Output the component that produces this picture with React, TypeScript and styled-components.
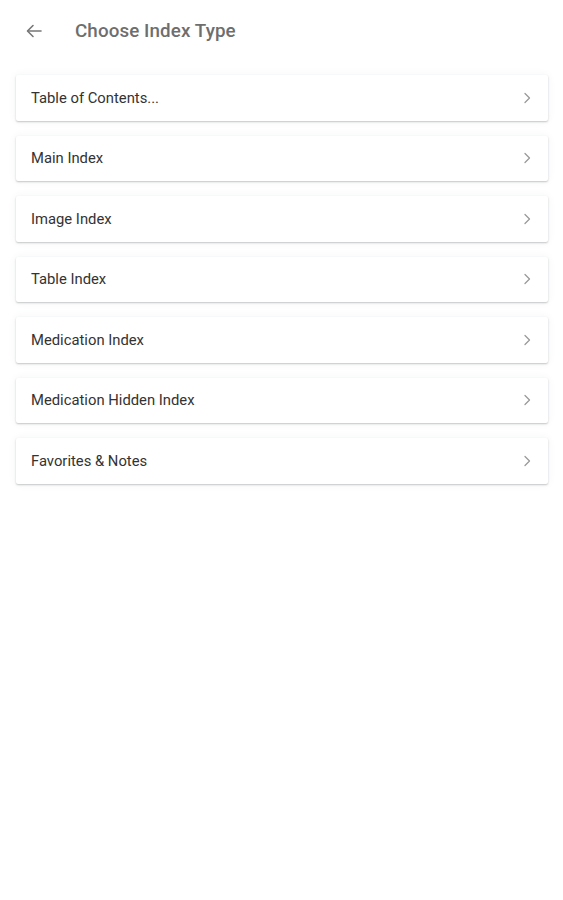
import React from "react";
import styled, { createGlobalStyle } from "styled-components";

const Global = createGlobalStyle`
  html, body { margin: 0; padding: 0; background: #ffffff; }
  body { font-family: Roboto, "Noto Sans", Arial, sans-serif; }
`;

const Page = styled.div`
  width: 563px;
  min-height: 900px;
  background: #ffffff;
`;

const Header = styled.header`
  display: flex;
  align-items: center;
  height: 62px;
  padding-left: 24px;
`;

const BackButton = styled.button`
  border: none;
  background: transparent;
  padding: 0;
  width: 20px;
  height: 20px;
  display: flex;
  align-items: center;
  justify-content: center;
  color: #777;
  margin-right: 31px;
`;

const Title = styled.h1`
  margin: 0;
  font-size: 18.8px;
  font-weight: 500;
  color: #6e6e6e;
  letter-spacing: 0.1px;
`;

const List = styled.div`
  display: flex;
  flex-direction: column;
  gap: 15px;
  padding: 13px 15px 0 16px;
`;

const Item = styled.div`
  display: flex;
  align-items: center;
  justify-content: space-between;
  height: 45.5px;
  padding: 0 16px 0 15px;
  background: #fff;
  border-radius: 2px;
  box-shadow: 0 1px 2px rgba(0, 0, 0, 0.22), 0 0 10px rgba(40, 60, 100, 0.05);
`;

const Label = styled.span`
  font-size: 14.8px;
  color: #333;
`;

const Chevron = styled.svg`
  width: 10px;
  height: 12px;
  color: #9a9a9a;
`;

const items = [
  "Table of Contents...",
  "Main Index",
  "Image Index",
  "Table Index",
  "Medication Index",
  "Medication Hidden Index",
  "Favorites & Notes",
];

export default function App() {
  return (
    <Page>
      <Global />
      <Header>
        <BackButton aria-label="Back">
          <svg width="16" height="14" viewBox="0 0 16 14" fill="none" stroke="#777" strokeWidth="1.6" strokeLinecap="round" strokeLinejoin="round">
            <path d="M15 7H2" />
            <path d="M7 1.5L1.5 7L7 12.5" />
          </svg>
        </BackButton>
        <Title>Choose Index Type</Title>
      </Header>
      <List>
        {items.map((t) => (
          <Item key={t}>
            <Label>{t}</Label>
            <Chevron viewBox="0 0 10 12" fill="none" stroke="currentColor" strokeWidth="1.3" strokeLinecap="round" strokeLinejoin="round">
              <path d="M3 1.5L7.5 6L3 10.5" />
            </Chevron>
          </Item>
        ))}
      </List>
    </Page>
  );
}
